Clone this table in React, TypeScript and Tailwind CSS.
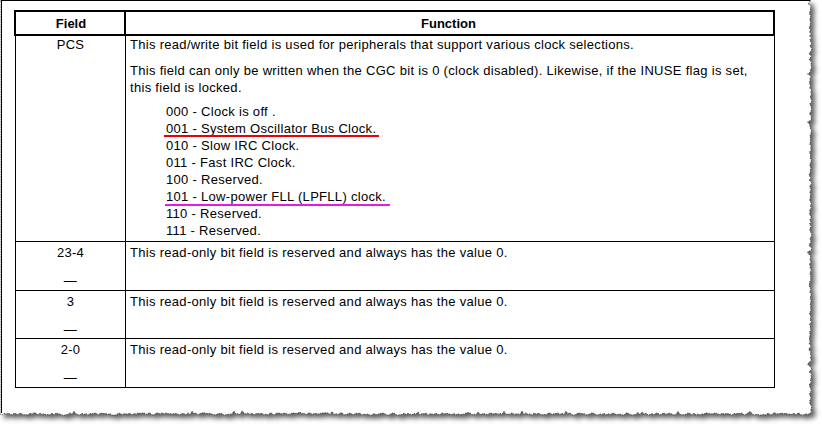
import React from 'react';

// deterministic jitter for the torn paper edge
function makeTornPath(): string {
  let seed = 11;
  const rnd = () => {
    seed = (seed * 16807) % 2147483647;
    return (seed - 1) / 2147483646;
  };
  const pts: string[] = ['M0,0', 'L811,0'];
  for (let y = 2; y <= 410; y += 2) {
    const x = 810.5 + (rnd() - 0.5) * 2.4 + (rnd() < 0.08 ? -1.8 : 0);
    pts.push(`L${x.toFixed(1)},${y}`);
  }
  pts.push('L812,413');
  for (let x = 810; x >= 0; x -= 2) {
    const y = 414 + (rnd() - 0.5) * 2.6 + (rnd() < 0.08 ? -2 : 0);
    pts.push(`L${x},${y.toFixed(1)}`);
  }
  pts.push('Z');
  return pts.join(' ');
}

const tornPath = makeTornPath();

const PaperEdge: React.FC = () => (
  <svg className="absolute inset-0 pointer-events-none" width={822} height={426}>
    <defs>
      <filter id="paperShadow" x="-5%" y="-5%" width="110%" height="110%">
        <feGaussianBlur stdDeviation="2.4" />
      </filter>
    </defs>
    <path d={tornPath} fill="#5e5e5e" transform="translate(4 4)" filter="url(#paperShadow)" />
    <path d={tornPath} fill="#ffffff" stroke="#3a3a3a" strokeWidth={0.8} strokeDasharray="1.5 1" />
  </svg>
);

const codes = [
  { text: '000 - Clock is off .' },
  { text: '001 - System Oscillator Bus Clock.', mark: 'red' },
  { text: '010 - Slow IRC Clock.' },
  { text: '011 - Fast IRC Clock.' },
  { text: '100 - Reserved.' },
  { text: '101 - Low-power FLL (LPFLL) clock.', mark: 'magenta' },
  { text: '110 - Reserved.' },
  { text: '111 - Reserved.' },
];

const reserved = [
  { field: '23-4', h: 'h-[49px]' },
  { field: '3', h: 'h-[48px]' },
  { field: '2-0', h: 'h-[49px]' },
];

export default function App() {
  return (
    <div
      className="relative w-[822px] h-[426px] overflow-hidden bg-white text-black text-[13px] leading-[17px] tracking-[0.3px]"
      style={{ fontFamily: '"Liberation Sans", Arial, sans-serif' }}
    >
      <PaperEdge />

      <div className="relative ml-px w-[809px] h-[413px] border-l border-t border-black pl-[12px] pt-[9px]">
        {/* Header */}
        <div className="flex w-[761px] h-[26px] border-2 border-black font-bold tracking-normal">
          <div className="w-[110px] border-r-2 border-black flex items-center justify-center pl-[2px]">Field</div>
          <div className="flex-1 flex items-center justify-center pr-[2px]">Function</div>
        </div>

        {/* Body */}
        <div className="ml-px w-[760px] border-x border-black">
          {/* PCS */}
          <div className="flex h-[206px] border-b border-black">
            <div className="w-[110px] border-r border-black text-center">PCS</div>
            <div className="flex-1 pl-[4px]">
              <p>This read/write bit field is used for peripherals that support various clock selections.</p>
              <p className="mt-[9px]">
                This field can only be written when the CGC bit is 0 (clock disabled). Likewise, if the INUSE flag is set,
                <br />
                this field is locked.
              </p>
              <ul className="mt-[7px] pl-[36px]">
                {codes.map((c) => (
                  <li key={c.text}>
                    <span className="relative inline-block">
                      {c.text}
                      {c.mark === 'red' && (
                        <span className="absolute -left-[2px] -right-[3px] top-[15px] h-[2px] bg-[#e8000b]" />
                      )}
                      {c.mark === 'magenta' && (
                        <span className="absolute -left-[1px] -right-[4px] top-[16px] h-[2px] bg-[#e619e6]" />
                      )}
                    </span>
                  </li>
                ))}
              </ul>
            </div>
          </div>

          {reserved.map((r) => (
            <div key={r.field} className={`flex ${r.h} border-b border-black`}>
              <div className="w-[110px] border-r border-black text-center pt-[2px]">
                <p>{r.field}</p>
                <p className="mt-[11px]">—</p>
              </div>
              <div className="flex-1 pl-[4px] pt-[2px]">This read-only bit field is reserved and always has the value 0.</div>
            </div>
          ))}
        </div>
      </div>
    </div>
  );
}
